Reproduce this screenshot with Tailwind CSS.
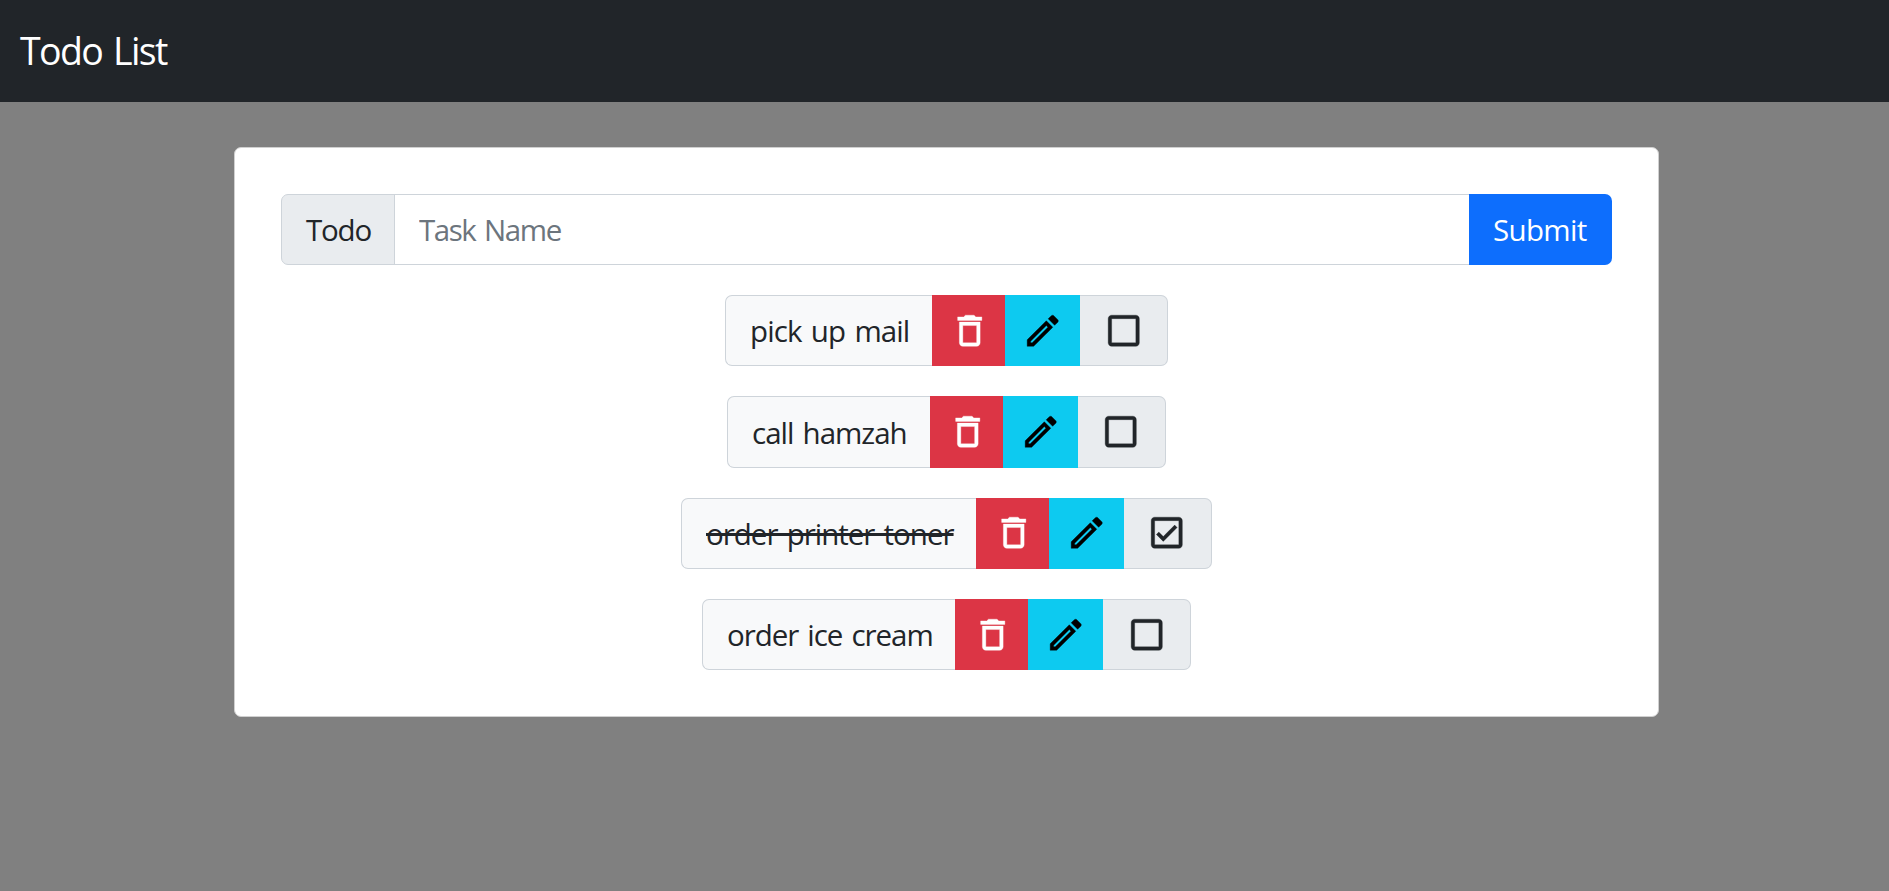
<!DOCTYPE html>
<html lang="en">
<head>
<meta charset="utf-8">
<title>Todo List</title>
<script src="https://cdn.jsdelivr.net/npm/@tailwindcss/browser@4"></script>
</head>
<body class="min-h-screen bg-[#808080] font-['Open_Sans','Noto_Sans',sans-serif] text-[29.5px] leading-[45px] text-[#212529] [word-spacing:2.5px]">
<svg class="hidden">
  <symbol id="trash" viewBox="0 0 24 24"><path d="M16 9v10H8V9h8m-1.500-6h-5l-1 1H5v2h14V4h-3.500l-1-1zM18 7H6v12c0 1.100.9 2 2 2h8c1.100 0 2-.9 2-2V7z"/></symbol>
  <symbol id="pencil" viewBox="0 0 24 24"><path d="M14.060 9.020l.92.92L5.920 19H5v-.92l9.060-9.060M17.660 3c-.25 0-.51.1-.7.29l-1.830 1.830 3.750 3.750 1.830-1.830c.39-.39.39-1.020 0-1.410l-2.340-2.340c-.2-.2-.45-.29-.71-.29zm-3.600 3.190L3 17.250V21h3.750L17.810 9.940l-3.750-3.750z"/></symbol>
  <symbol id="box" viewBox="0 0 24 24"><path d="M19 5v14H5V5h14m0-2H5c-1.100 0-2 .9-2 2v14c0 1.100.9 2 2 2h14c1.100 0 2-.9 2-2V5c0-1.100-.9-2-2-2z"/></symbol>
  <symbol id="checked" viewBox="0 0 24 24"><path d="M19 3H5c-1.100 0-2 .9-2 2v14c0 1.100.9 2 2 2h14c1.100 0 2-.9 2-2V5c0-1.100-.9-2-2-2zm0 16H5V5h14v14zM17.990 9l-1.410-1.420-6.590 6.590-2.580-2.570-1.420 1.410 4 3.990z"/></symbol>
</svg>
<header class="flex h-[102px] items-center bg-[#212529] pb-[2px] pl-5 text-[37.500px] tracking-[-1.6px] text-white"><span class="whitespace-nowrap">Todo List</span></header>
<main class="mx-auto mt-[45px] ml-[234px] h-[570px] w-[1425px] rounded-[7px] border border-[#d0d0d0] bg-white px-[46px] pt-[46px]">
  <form class="flex h-[71px] w-[1331px]">
    <label class="flex w-[114px] shrink-0 items-center rounded-l-[7px] border border-[#ced4da] bg-[#e9ecef] pl-6 tracking-[-1.2px] whitespace-nowrap">Todo</label>
    <input class="-ml-px min-w-0 flex-1 border border-[#ced4da] bg-white px-6 tracking-[-1.45px] [word-spacing:2.5px] placeholder:text-[#6c757d]" placeholder="Task Name">
    <button type="button" class="-ml-px flex w-[143px] items-center rounded-r-[7px] bg-[#0d6efd] pl-[24px] tracking-[-0.65px] whitespace-nowrap text-white">Submit</button>
  </form>
  <ul class="mt-[30px] flex flex-col gap-[30.300px]">
    <li class="ml-[444px] flex h-[71px]">
      <span class="flex w-[207px] items-center rounded-l-[7px] border border-r-0 border-[#ced4da] bg-[#f8f9fa] pl-6 tracking-[-0.9px] whitespace-nowrap">pick up mail</span>
      <button class="flex w-[73px] items-center justify-center bg-[#dc3545] pl-[2px] text-white"><svg class="size-[41.500px] fill-current stroke-current stroke-[0.2px]"><use href="#trash"/></svg></button>
      <button class="flex w-[75px] items-center justify-center bg-[#0dcaf0] text-black"><svg class="size-[41.500px] fill-current stroke-current stroke-[0.2px]"><use href="#pencil"/></svg></button>
      <span class="flex w-[88px] items-center justify-center rounded-r-[7px] border border-l-0 border-[#ced4da] bg-[#e9ecef]"><svg class="size-[41.500px] fill-current stroke-current stroke-[0.2px]"><use href="#box"/></svg></span>
    </li>
    <li class="-mb-px ml-[446px] flex h-[72px]">
      <span class="flex w-[203px] items-center rounded-l-[7px] border border-r-0 border-[#ced4da] bg-[#f8f9fa] pt-px pl-6 tracking-[-1px] whitespace-nowrap">call hamzah</span>
      <button class="flex w-[73px] items-center justify-center bg-[#dc3545] pb-px pl-[2px] text-white"><svg class="size-[41.500px] fill-current stroke-current stroke-[0.2px]"><use href="#trash"/></svg></button>
      <button class="flex w-[75px] items-center justify-center bg-[#0dcaf0] pb-px text-black"><svg class="size-[41.500px] fill-current stroke-current stroke-[0.2px]"><use href="#pencil"/></svg></button>
      <span class="flex w-[88px] items-center justify-center rounded-r-[7px] border border-l-0 border-[#ced4da] bg-[#e9ecef] pr-[2px] pb-px"><svg class="size-[41.500px] fill-current stroke-current stroke-[0.2px]"><use href="#box"/></svg></span>
    </li>
    <li class="ml-[400px] flex h-[71px]">
      <span class="flex w-[295px] items-center rounded-l-[7px] border border-r-0 border-[#ced4da] bg-[#f8f9fa] pl-6 tracking-[-1px] whitespace-nowrap"><s class="decoration-[3px]">order printer toner</s></span>
      <button class="flex w-[73px] items-center justify-center bg-[#dc3545] pl-[2px] text-white"><svg class="size-[41.500px] fill-current stroke-current stroke-[0.2px]"><use href="#trash"/></svg></button>
      <button class="flex w-[75px] items-center justify-center bg-[#0dcaf0] text-black"><svg class="size-[41.500px] fill-current stroke-current stroke-[0.2px]"><use href="#pencil"/></svg></button>
      <span class="flex w-[88px] items-center justify-center rounded-r-[7px] border border-l-0 border-[#ced4da] bg-[#e9ecef] pr-[2px]"><svg class="size-[41.500px] fill-current stroke-current stroke-[0.2px]"><use href="#checked"/></svg></span>
    </li>
    <li class="ml-[421px] flex h-[71px]">
      <span class="flex w-[253px] items-center rounded-l-[7px] border border-r-0 border-[#ced4da] bg-[#f8f9fa] pl-6 tracking-[-1.05px] whitespace-nowrap">order ice cream</span>
      <button class="flex w-[73px] items-center justify-center bg-[#dc3545] pl-[2px] text-white"><svg class="size-[41.500px] fill-current stroke-current stroke-[0.2px]"><use href="#trash"/></svg></button>
      <button class="flex w-[75px] items-center justify-center bg-[#0dcaf0] text-black"><svg class="size-[41.500px] fill-current stroke-current stroke-[0.2px]"><use href="#pencil"/></svg></button>
      <span class="flex w-[88px] items-center justify-center rounded-r-[7px] border border-l-0 border-[#ced4da] bg-[#e9ecef]"><svg class="size-[41.500px] fill-current stroke-current stroke-[0.2px]"><use href="#box"/></svg></span>
    </li>
  </ul>
</main>
</body>
</html>
